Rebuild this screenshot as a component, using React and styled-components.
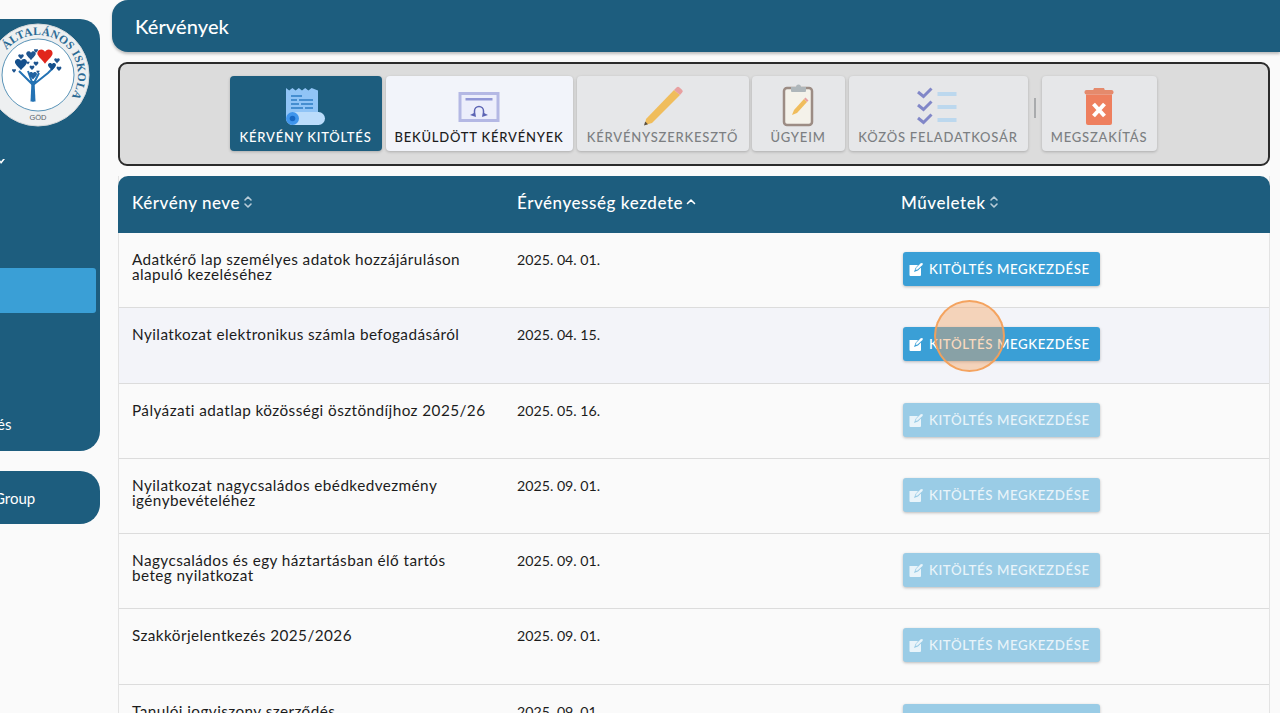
import React from 'react';
import styled, { createGlobalStyle } from 'styled-components';

const Global = createGlobalStyle`
  html, body { margin: 0; padding: 0; height: 713px; overflow: hidden; background: #fafafa; }
  body { font-family: "Lato", "Noto Sans", sans-serif; color: #1c1c1c; }
  * { box-sizing: border-box; }
`;
const BLUE = '#1d5d7e';
const Page = styled.div`position: relative; display: flex; height: 713px; overflow: hidden; background: #fafafa;`;
const Side = styled.aside`width: 100px; flex: none; padding-top: 19px; display: flex; flex-direction: column; gap: 20px; color: #fff;`;
const SideCard = styled.div`
  background: ${BLUE}; border-radius: 0 20px 20px 0; height: ${p => p.$h}px; overflow: hidden; display: flex; flex-direction: column; flex: none;
`;
const Logo = styled.svg`width: 104px; height: 104px; margin: 4px 0 0 -14px; flex: none; display: block;`;
const Chevron = styled.svg`width: 5px; height: 5px; margin-top: 32px; flex: none; display: block;`;
const ActiveNav = styled.div`width: 96px; height: 45px; margin-top: 104px; background: #3a9fd6; border-radius: 0 3px 3px 0; flex: none;`;
const NavText = styled.div`font-size: 15px; line-height: 20px; margin-top: ${p => p.$top}px; margin-left: ${p => p.$left}px; white-space: nowrap;`;
const Main = styled.main`flex: 1; min-width: 0; padding-left: 12px; display: flex; flex-direction: column;`;
const Header = styled.header`
  height: 52px; flex: none; background: ${BLUE}; border-radius: 16px 0 0 16px; color: #fff; font-size: 20px; font-weight: 500;
  display: flex; align-items: center; padding-left: 23px; box-shadow: 0 2px 3px rgba(0,0,0,.25); letter-spacing: .1px;
`;
const Content = styled.div`flex: none; padding: 10px 10px 0 6px; display: flex; flex-direction: column; gap: 10px;`;
const Toolbar = styled.div`
  height: 104px; flex: none; background: #dcdcdc; border: 2px solid #2b2b2b; border-radius: 9px; display: flex; justify-content: center; padding: 12px 2px 0 0;
`;
const ToolGroup = styled.div`display: flex; gap: 4px; align-items: flex-start;`;
const Tool = styled.div`
  width: ${p => p.$w}px; height: 75px; border-radius: 4px; display: flex; flex-direction: column; align-items: center;
  background: ${p => p.$kind === 'active' ? BLUE : p.$kind === 'light' ? '#f2f4fa' : '#e6e7e9'};
  color: ${p => p.$kind === 'active' ? '#fff' : p.$kind === 'light' ? '#1d1d1d' : '#7c7f82'};
  box-shadow: 0 1px 3px rgba(0,0,0,.22);
  margin-left: ${p => p.$ml || 0}px;
`;
const ToolIcon = styled.svg`width: 48px; height: 48px; margin-top: 8px; flex: none; display: block;`;
const ToolLabel = styled.span`font-size: 13px; line-height: 16px; margin-top: -3px; letter-spacing: .8px; white-space: nowrap; font-weight: 500;`;
const Sep = styled.div`width: 2px; height: 20px; background: #a9abad; margin: 22px 0 0 2px; flex: none;`;
const Table = styled.section`display: flex; flex-direction: column; border-left: 1px solid #e3e3e3; border-right: 1px solid #e3e3e3;`;
const Row = styled.div`display: grid; grid-template-columns: 385px 384px 1fr;`;
const HeadRow = styled(Row)`
  background: ${BLUE}; color: #fff; height: 57px; border-radius: 10px 10px 0 0; align-items: center; margin: 0 -1px; padding-bottom: 5px;
  font-size: 17px; font-weight: 500; letter-spacing: .55px; flex: none;
`;
const HeadCell = styled.div`padding-left: 14px; display: flex; align-items: center; gap: 3px; white-space: nowrap;`;
const BodyRow = styled(Row)`
  height: 75.25px; flex: none; background: ${p => p.$hover ? '#f3f4f9' : '#fafafa'}; border-bottom: 1px solid #dcdcdc; font-size: 15.3px; line-height: 15px;
`;
const Cell = styled.div`padding: 19px 18px 0 13px; letter-spacing: .43px;`;
const DateCell = styled.div`padding: 19px 0 0 13px; font-size: 14.2px;`;
const ActionCell = styled.div`padding: 19px 0 0 15px;`;
const FillButton = styled.button`
  width: 197px; height: 34px; border: 0; border-radius: 3px; padding: 0 0 0 5px; display: flex; align-items: center; gap: 5px;
  background: ${p => p.$off ? '#9accE6' : '#3a9fd6'}; color: ${p => p.$off ? '#e9f4fa' : '#fff'};
  font: 500 13.3px "Lato", sans-serif; letter-spacing: .6px; box-shadow: 0 1px 3px rgba(0,0,0,.25); white-space: nowrap;
`;
const PenIcon = styled.svg`width: 16px; height: 16px; flex: none; display: block; fill: currentColor;`;
const Cursor = styled.div`
  position: absolute; left: 934px; top: 300px; width: 71px; height: 72px; border-radius: 50%;
  border: 2px solid rgba(243,160,90,.95); background: rgba(245,165,100,.42);
`;

const Sort = ({ up }) => (
  <svg width="10" height="16" viewBox="0 0 10 16" fill="none" stroke={up ? '#fff' : '#b8ccd8'} strokeWidth="1.6" strokeLinecap="round" strokeLinejoin="round">
    <path d={up ? 'M1.5 9.5 5 6l3.5 3.5' : 'M2 6l3-3 3 3M2 10l3 3 3-3'} />
  </svg>
);
const Heart = ({ x, y, s, c = '#1f5590' }) => (
  <path transform={`translate(${x} ${y}) scale(${s})`} fill={c} d="M0 7C-2 4-6 1-7.500-2-9-5-7-8-4-8-2-8-.7-7 0-5.500.7-7 2-8 4-8 7-8 9-5 7.500-2 6 1 2 4 0 7Z" />
);
const PenBox = () => (
  <PenIcon viewBox="0 0 16 16">
    <path d="M1.500 4H10L7.500 7 6 11l4-1.500 3-3V14a1 1 0 0 1-1 1H2.500a1 1 0 0 1-1-1Z" />
    <path d="M7.500 9 8.500 6.500 13 2l2 .5-.5 1.500-5 4.500Z" />
  </PenIcon>
);

const rows = [
  ['Adatkérő lap személyes adatok hozzájáruláson alapuló kezeléséhez', '2025. 04. 01.', false],
  ['Nyilatkozat elektronikus számla befogadásáról', '2025. 04. 15.', false, true],
  ['Pályázati adatlap közösségi ösztöndíjhoz 2025/26', '2025. 05. 16.', true],
  ['Nyilatkozat nagycsaládos ebédkedvezmény igénybevételéhez', '2025. 09. 01.', true],
  ['Nagycsaládos és egy háztartásban élő tartós beteg nyilatkozat', '2025. 09. 01.', true],
  ['Szakkörjelentkezés 2025/2026', '2025. 09. 01.', true],
  ['Tanulói jogviszony szerződés', '2025. 09. 01.', true],
];

export default function App() {
  return (
    <Page>
      <Global />
      <Side>
        <SideCard $h={432}>
          <Logo viewBox="0 0 104 104">
            <defs>
              <path id="arc" d="M12 52A40 40 0 0 1 92 52" />
            </defs>
            <circle cx="52" cy="52" r="51" fill="#eef0f1" stroke="#d5d8da" />
            <circle cx="52" cy="52" r="36" fill="#fff" stroke="#5a94b8" strokeWidth="1" />
            <g transform="rotate(36 52 52)">
              <text fontFamily="Liberation Serif, serif" fontSize="11.500" fontWeight="700" fill="#2b6a94" letterSpacing=".3">
                <textPath href="#arc" startOffset="50%" textAnchor="middle">ÁLTALÁNOS ISKOLA</textPath>
              </text>
            </g>
            <text x="52" y="97" textAnchor="middle" fontFamily="Liberation Sans, sans-serif" fontSize="7.500" fill="#58626a">GÖD</text>
            <path d="M47 78.500V62L33 48M47 62 42 48M47 62 62 50 68 44M47 62 53 50" fill="none" stroke="#2372b4" strokeWidth="2" />
            <path d="M44.500 78.500h5L48.500 58h-3Z" fill="#2372b4" />
            <Heart x={35} y={42} s={.75} c="#15508c" />
            <Heart x={59} y={34} s={.95} c="#e1261c" />
            <Heart x={45} y={33} s={.6} />
            <Heart x={66} y={44} s={.5} c="#15508c" />
            <Heart x={71} y={38} s={.35} />
            <Heart x={73} y={46} s={.3} />
            <Heart x={47} y={53} s={.5} c="#2262a0" />
            <Heart x={50} y={41} s={.3} />
            <Heart x={46} y={45} s={.3} />
            <Heart x={50} y={28} s={.25} />
            <Heart x={35} y={34} s={.35} />
            <Heart x={28} y={48} s={.25} />
            <Heart x={42} y={40} s={.2} />
            <Heart x={52} y={49} s={.2} />
          </Logo>
          <Chevron viewBox="0 0 5 5"><path d="M-1 0 1 2.500 3 0H5L1 5-2 0Z" fill="#fff" /></Chevron>
          <ActiveNav />
          <NavText $top={101} $left={-3}>és</NavText>
        </SideCard>
        <SideCard $h={53}>
          <NavText $top={17} $left={-6}>Group</NavText>
        </SideCard>
      </Side>
      <Main>
        <Header>Kérvények</Header>
        <Content>
          <Toolbar>
            <ToolGroup>
              <Tool $kind="active" $w={152}>
                <ToolIcon viewBox="0 0 48 48">
                  <path d="M4 4l3.200 2.500L10.400 4l3.200 2.500L16.800 4 20 6.500 23.200 4l3.200 2.500L29.600 4 36 6.500V34H4Z" fill="#90c4f6" />
                  <path d="M9 12h11M9 16h6M17 16h14M9 20h8M19 20h12M9 24h12M23 24h8" stroke="#2c7cc4" strokeWidth="1.500" />
                  <rect x="4" y="28" width="39" height="13" rx="6.500" fill="#bbdcfb" />
                  <circle cx="10.500" cy="34.500" r="6.500" fill="#3f95ec" />
                  <circle cx="10.500" cy="34.500" r="2.800" fill="#1868c4" />
                </ToolIcon>
                <ToolLabel>KÉRVÉNY KITÖLTÉS</ToolLabel>
              </Tool>
              <Tool $kind="light" $w={187}>
                <ToolIcon viewBox="0 0 48 48">
                  <rect x="3.500" y="8" width="41" height="30" fill="#b4b8e4" />
                  <rect x="6.500" y="11" width="35" height="24" fill="#eceefb" />
                  <rect x="10.500" y="14" width="27" height="2.500" fill="#9197d6" />
                  <path d="M19.500 32v-5a4.500 4.500 0 0 1 9 0v5" fill="none" stroke="#5c64b4" strokeWidth="1.500" />
                  <path d="M15 31l5-2.500 1 4.500ZM33 31l-5-2.500-1 4.500Z" fill="#5c64b4" />
                </ToolIcon>
                <ToolLabel>BEKÜLDÖTT KÉRVÉNYEK</ToolLabel>
              </Tool>
              <Tool $w={172}>
                <ToolIcon viewBox="0 0 48 48">
                  <path d="M7 35 35 6 41 11 13 39 6 41Z" fill="#f0bd5c" />
                  <path d="M35 6l2.500-2.500a2 2 0 0 1 3 0l2.500 2.200a2 2 0 0 1 0 3L41 11Z" fill="#e8a0a0" />
                  <path d="M5 41.500l1.200-4 2.800 2.800Z" fill="#5a5040" />
                </ToolIcon>
                <ToolLabel>KÉRVÉNYSZERKESZTŐ</ToolLabel>
              </Tool>
              <Tool $w={93} $ml={-1}>
                <ToolIcon viewBox="0 0 48 48">
                  <rect x="10" y="4" width="28" height="37" rx="3" fill="#f4f2ea" stroke="#9c8c84" strokeWidth="2.500" />
                  <path d="M17 3h5a2.500 2.500 0 0 1 5 0h5v4a1 1 0 0 1-1 1H18a1 1 0 0 1-1-1Z" fill="#aeb6ba" />
                  <path d="M30 15l3 3-10 11-5 2 2-5Z" fill="#f0bd5c" />
                  <path d="M30 15l1.500-1.500 3 3L33 18Z" fill="#e8a0a0" />
                </ToolIcon>
                <ToolLabel>ÜGYEIM</ToolLabel>
              </Tool>
              <Tool $w={179}>
                <ToolIcon viewBox="0 0 48 48">
                  <path d="M4 8l5.500 4.500 8-8M4 21l5.500 4.500 8-8M4 34l5.500 4.500 8-8" fill="none" stroke="#8187c8" strokeWidth="3" />
                  <path d="M23.500 8h19v4h-19ZM23.500 21h19v4h-19ZM23.500 34h19v4h-19Z" fill="#bcd8ee" />
                </ToolIcon>
                <ToolLabel>KÖZÖS FELADATKOSÁR</ToolLabel>
              </Tool>
              <Sep />
              <Tool $w={115} $ml={2}>
                <ToolIcon viewBox="0 0 48 48">
                  <path d="M19 4h10l1 2.500H18Z" fill="#e58a6c" />
                  <rect x="9.500" y="6" width="29" height="4.500" rx="2" fill="#e58a6c" />
                  <path d="M11 10.500h26V39a2 2 0 0 1-2 2H13a2 2 0 0 1-2-2Z" fill="#ee7f5e" />
                  <path d="M18.500 20l11 12M29.500 20l-11 12" stroke="#fff" strokeWidth="4" />
                </ToolIcon>
                <ToolLabel>MEGSZAKÍTÁS</ToolLabel>
              </Tool>
            </ToolGroup>
          </Toolbar>
          <Table>
            <HeadRow>
              <HeadCell>Kérvény neve <Sort /></HeadCell>
              <HeadCell>Érvényesség kezdete <Sort up /></HeadCell>
              <HeadCell>Műveletek <Sort /></HeadCell>
            </HeadRow>
            {rows.map(([name, date, off, hover]) => (
              <BodyRow key={name} $hover={hover}>
                <Cell>{name}</Cell>
                <DateCell>{date}</DateCell>
                <ActionCell>
                  <FillButton $off={off}><PenBox />KITÖLTÉS MEGKEZDÉSE</FillButton>
                </ActionCell>
              </BodyRow>
            ))}
          </Table>
        </Content>
      </Main>
      <Cursor />
    </Page>
  );
}
